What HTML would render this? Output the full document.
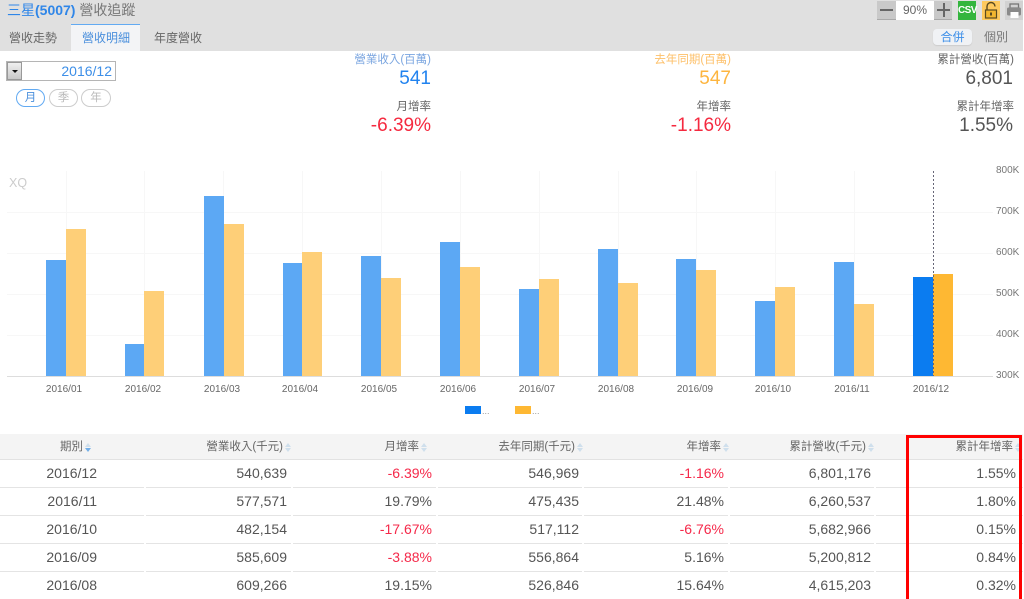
<!DOCTYPE html>
<html lang="zh-Hant"><head><meta charset="utf-8"><title>三星(5007) 營收追蹤</title>
<style>
html,body{margin:0;padding:0;width:1024px;height:599px;overflow:hidden;background:#fff}
body{position:relative;font-family:"Liberation Sans","Noto Sans CJK TC",sans-serif;color:#555;filter:blur(.3px)}
.a{position:absolute;white-space:nowrap}
.r{text-align:right}
.lab{font-size:11.5px;line-height:14px;color:#666}
.val{font-size:19px;line-height:22px}
.row{position:absolute;left:0;width:1023px;height:27px;border-bottom:1px solid #e4e4e4;font-size:14px;line-height:27px;color:#555}
.row span,.hd span{position:absolute;top:0;text-align:right;white-space:nowrap}
.row b{font-weight:normal;color:#f5294a}
.c0{left:0;width:97px}.c1{left:146px;width:141px}.c2{left:290px;width:142px}.c3{left:436px;width:143px}
.c4{left:584px;width:140px}.c5{left:728px;width:143px}.c6{left:875px;width:141px}
.hd{position:absolute;left:0;top:434px;width:1023px;height:25px;background:#f4f4f4;border-bottom:1px solid #e2e2e2;font-size:11.5px;line-height:26px;color:#666}
.s{display:inline-block;width:6px;height:9px;margin-left:2px;vertical-align:-2px;position:relative}
.s:before,.s:after{content:"";position:absolute;left:0;border-left:3px solid transparent;border-right:3px solid transparent}
.s:before{top:0;border-bottom:4px solid #cfdfec}.s:after{top:5px;border-top:4px solid #cfdfec}
.s.on:after{border-top-color:#72aee8}
.pill{position:absolute;top:89px;height:16px;width:27px;border:1px solid #ccc;border-radius:9px;font-size:11.5px;line-height:16px;text-align:center;color:#bbb;background:#fff}
.tool{position:absolute;background:#c9c9c9}
.gap{position:absolute;top:460px;width:2px;height:139px;background:#fff}
</style></head><body>
<div class="a" style="left:0;top:0;width:1023px;height:51px;background:#e0e0e0"></div>
<div class="a" style="left:7px;top:0;font-size:14px;line-height:20px;color:#777"><span style="color:#2f86e8">三星<b>(5007)</b></span> 營收追蹤</div>
<div class="a" style="left:71px;top:24px;width:69px;height:26px;background:#f3f4f6;border-top:1px solid #62aaf2"></div>
<div class="a" style="left:9px;top:30px;font-size:12px;line-height:16px;color:#666">營收走勢</div>
<div class="a" style="left:82px;top:30px;font-size:12px;line-height:16px;color:#4a8fdc">營收明細</div>
<div class="a" style="left:154px;top:30px;font-size:12px;line-height:16px;color:#666">年度營收</div>

<div class="tool" style="left:877px;top:1px;width:19px;height:18px;border-bottom:1px solid #aaa"></div>
<div class="a" style="left:880px;top:9px;width:13px;height:2px;background:#666"></div>
<div class="a" style="left:896px;top:1px;width:38px;height:19px;background:#fff;font-size:12px;line-height:19px;text-align:center;color:#666">90%</div>
<div class="tool" style="left:934px;top:1px;width:18px;height:18px;border-bottom:1px solid #aaa"></div>
<div class="a" style="left:937px;top:9px;width:13px;height:2px;background:#666"></div>
<div class="a" style="left:943px;top:3px;width:2px;height:14px;background:#666"></div>
<div class="a" style="left:958px;top:1px;width:18px;height:19px;background:#33b53d;color:#fff;font-size:10px;font-weight:bold;line-height:19px;text-align:center;letter-spacing:-.6px">CSV</div>
<svg class="a" style="left:982px;top:1px" width="18" height="19" viewBox="0 0 18 19"><rect width="18" height="19" fill="#fdc95e"/><path d="M5 9V5.5a4 4 0 0 1 8 0" fill="none" stroke="#5a4a20" stroke-width="1.4"/><rect x="3.5" y="9" width="11" height="8" fill="#f2b62f" stroke="#5a4a20" stroke-width="1.2"/><rect x="8" y="11.5" width="2" height="3" fill="#5a4a20"/></svg>
<svg class="a" style="left:1005px;top:1px" width="18" height="19" viewBox="0 0 18 19"><rect width="18" height="19" fill="#d2d2d2"/><rect x="5" y="3" width="8.5" height="4" fill="none" stroke="#777" stroke-width="1.3"/><rect x="2" y="6.5" width="14" height="8" rx="1.5" fill="#8a8a8a"/><rect x="5.5" y="11" width="8" height="6" fill="#fff"/></svg>

<div class="a" style="left:933px;top:29px;width:39px;height:16px;background:#f0f2f5;border-radius:4px;box-shadow:0 1px 1px #ccc;font-size:12px;line-height:16px;text-align:center;color:#3d8fe8">合併</div>
<div class="a" style="left:984px;top:29px;font-size:12px;line-height:16px;color:#777">個別</div>

<div class="a" style="left:6px;top:61px;width:108px;height:18px;border:1px solid #b5b5b5;background:#fff"></div>
<div class="a" style="left:7px;top:62px;width:15px;height:18px;border:1px solid #999;box-sizing:border-box;background:linear-gradient(#f0f0f0,#c8c8c8)"></div>
<div class="a" style="left:12px;top:70px;border-left:3px solid transparent;border-right:3px solid transparent;border-top:3px solid #111"></div>
<div class="a r" style="left:30px;top:61px;width:82px;font-size:14px;line-height:20px;color:#3d8fe8">2016/12</div>
<div class="pill" style="left:16px;border-color:#62aaf2;color:#4a8fdc">月</div>
<div class="pill" style="left:49px;">季</div>
<div class="pill" style="left:81px;width:28px">年</div>

<div class="a r lab" style="left:300px;top:53px;width:131px;color:#7ba6e0">營業收入(百萬)</div>
<div class="a r val" style="left:300px;top:68px;width:131px;color:#2283ef">541</div>
<div class="a r lab" style="left:300px;top:100px;width:131px">月增率</div>
<div class="a r val" style="left:300px;top:115px;width:131px;color:#f5293f">-6.39%</div>
<div class="a r lab" style="left:600px;top:53px;width:131px;color:#fdc06a">去年同期(百萬)</div>
<div class="a r val" style="left:600px;top:68px;width:131px;color:#fdb53f">547</div>
<div class="a r lab" style="left:600px;top:100px;width:131px">年增率</div>
<div class="a r val" style="left:600px;top:115px;width:131px;color:#f5293f">-1.16%</div>
<div class="a r lab" style="left:880px;top:53px;width:134px">累計營收(百萬)</div>
<div class="a r val" style="left:880px;top:68px;width:133px;color:#555">6,801</div>
<div class="a r lab" style="left:880px;top:100px;width:134px">累計年增率</div>
<div class="a r val" style="left:880px;top:115px;width:133px;color:#555">1.55%</div>

<svg class="a" style="left:0;top:150px" width="1024" height="275" viewBox="0 150 1024 275" font-family="Liberation Sans, sans-serif">
<g stroke="#f7f7f7" stroke-width="1" shape-rendering="crispEdges">
<path d="M7 212.5H993M7 253.5H993M7 294.5H993M7 335.5H993"/>
<path d="M66.5 171V376M144.5 171V376M223.5 171V376M302.5 171V376M381.5 171V376M460.5 171V376M539.5 171V376M618.5 171V376M696.5 171V376M775.5 171V376M854.5 171V376"/>
</g>
<text x="9" y="187" font-size="12.5" fill="#ccc">XQ</text>
<g fill="#5ca8f4" shape-rendering="crispEdges">
<rect x="46" y="260" width="20" height="116"/><rect x="125" y="344" width="19" height="32"/><rect x="204" y="196" width="20" height="180"/><rect x="283" y="263" width="19" height="113"/><rect x="361" y="256" width="20" height="120"/><rect x="440" y="242" width="20" height="134"/><rect x="519" y="289" width="20" height="87"/><rect x="598" y="249" width="20" height="127"/><rect x="676" y="259" width="20" height="117"/><rect x="755" y="301" width="20" height="75"/><rect x="834" y="262" width="20" height="114"/>
</g>
<g fill="#fecf78" shape-rendering="crispEdges">
<rect x="66" y="229" width="20" height="147"/><rect x="144" y="291" width="20" height="85"/><rect x="224" y="224" width="20" height="152"/><rect x="302" y="252" width="20" height="124"/><rect x="381" y="278" width="20" height="98"/><rect x="460" y="267" width="20" height="109"/><rect x="539" y="279" width="20" height="97"/><rect x="618" y="283" width="20" height="93"/><rect x="696" y="270" width="20" height="106"/><rect x="775" y="287" width="20" height="89"/><rect x="854" y="304" width="20" height="72"/>
</g>
<rect x="913" y="277" width="20" height="99" fill="#0b7cf0" shape-rendering="crispEdges"/>
<rect x="933" y="274" width="20" height="102" fill="#feb833" shape-rendering="crispEdges"/>
<path d="M933.5 171V376" stroke="#667" stroke-width="1" stroke-dasharray="2 2" fill="none" shape-rendering="crispEdges"/>
<path d="M7 376.5H993" stroke="#ddd" stroke-width="1" shape-rendering="crispEdges"/>
<g font-size="10" fill="#666" text-anchor="middle">
<text x="64" y="392">2016/01</text><text x="143" y="392">2016/02</text><text x="222" y="392">2016/03</text><text x="300" y="392">2016/04</text><text x="379" y="392">2016/05</text><text x="458" y="392">2016/06</text><text x="537" y="392">2016/07</text><text x="616" y="392">2016/08</text><text x="695" y="392">2016/09</text><text x="773" y="392">2016/10</text><text x="852" y="392">2016/11</text><text x="931" y="392">2016/12</text>
</g>
<g font-size="10" fill="#777">
<text x="996" y="173">800K</text><text x="996" y="214">700K</text><text x="996" y="255">600K</text><text x="996" y="296">500K</text><text x="996" y="337">400K</text><text x="996" y="378">300K</text>
</g>
<rect x="465" y="406" width="16" height="8" fill="#0b7cf0"/><rect x="515" y="406" width="16" height="8" fill="#feb833"/>
<text x="482" y="414" font-size="9" fill="#999">...</text><text x="532" y="414" font-size="9" fill="#999">...</text>
</svg>

<div class="hd">
<span class="c0" style="width:91px">期別<i class="s on"></i></span>
<span class="c1" style="width:145px">營業收入(千元)<i class="s"></i></span>
<span class="c2" style="width:137px">月增率<i class="s"></i></span>
<span class="c3" style="width:147px">去年同期(千元)<i class="s"></i></span>
<span class="c4" style="width:145px">年增率<i class="s"></i></span>
<span class="c5" style="width:146px">累計營收(千元)<i class="s"></i></span>
<span class="c6" style="width:146px">累計年增率<i class="s"></i></span>
</div>
<div class="row" style="top:460px"><span class="c0">2016/12</span><span class="c1">540,639</span><span class="c2"><b>-6.39%</b></span><span class="c3">546,969</span><span class="c4"><b>-1.16%</b></span><span class="c5">6,801,176</span><span class="c6">1.55%</span></div>
<div class="row" style="top:488px"><span class="c0">2016/11</span><span class="c1">577,571</span><span class="c2">19.79%</span><span class="c3">475,435</span><span class="c4">21.48%</span><span class="c5">6,260,537</span><span class="c6">1.80%</span></div>
<div class="row" style="top:516px"><span class="c0">2016/10</span><span class="c1">482,154</span><span class="c2"><b>-17.67%</b></span><span class="c3">517,112</span><span class="c4"><b>-6.76%</b></span><span class="c5">5,682,966</span><span class="c6">0.15%</span></div>
<div class="row" style="top:544px"><span class="c0">2016/09</span><span class="c1">585,609</span><span class="c2"><b>-3.88%</b></span><span class="c3">556,864</span><span class="c4">5.16%</span><span class="c5">5,200,812</span><span class="c6">0.84%</span></div>
<div class="row" style="top:572px;border-bottom:0"><span class="c0">2016/08</span><span class="c1">609,266</span><span class="c2">19.15%</span><span class="c3">526,846</span><span class="c4">15.64%</span><span class="c5">4,615,203</span><span class="c6">0.32%</span></div>
<div class="gap" style="left:144px"></div><div class="gap" style="left:291px"></div><div class="gap" style="left:436px"></div><div class="gap" style="left:582px"></div><div class="gap" style="left:728px"></div><div class="gap" style="left:874px"></div>
<div class="a" style="left:906px;top:435px;width:110px;height:170px;border:3px solid #f00"></div>
</body></html>
